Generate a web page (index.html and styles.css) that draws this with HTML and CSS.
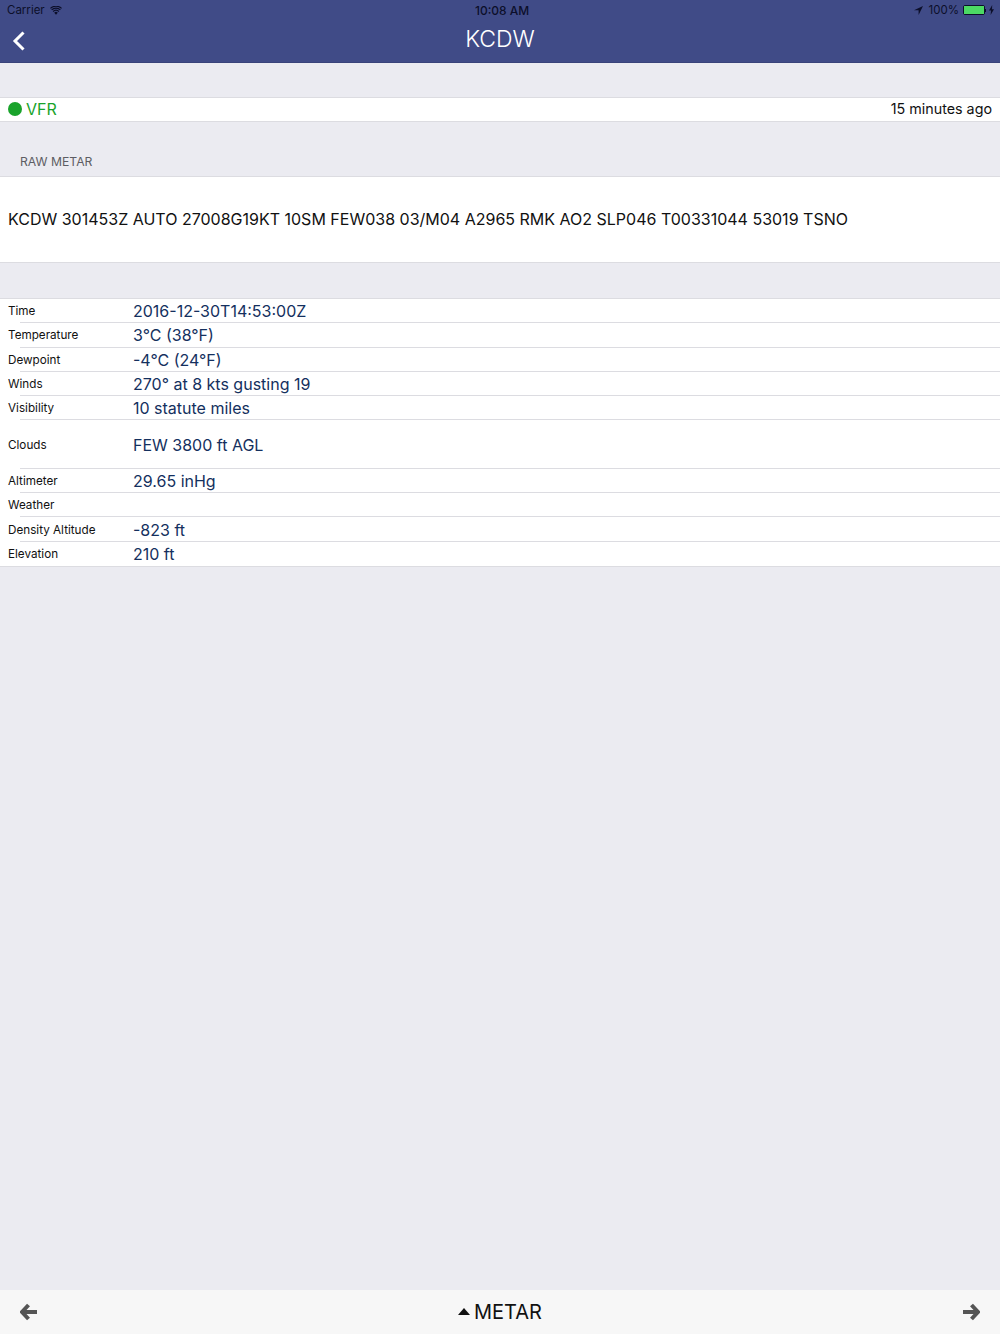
FILE: index.html
```html
<!DOCTYPE html>
<html lang="en">
<head>
  <meta charset="UTF-8">
  <meta name="viewport" content="width=device-width, initial-scale=1.0">
  <title>KCDW</title>
  <link rel="stylesheet" href="styles.css">
</head>
<body>
  <div class="screen">
    <header class="topbar">
      <div class="status">
        <div class="status-side">
          <span>Carrier</span>
          <svg class="wifi" width="12" height="9" viewBox="0 0 14 10">
            <path d="M7 10 4.9 7.6a3 3 0 0 1 4.2 0z" fill="#0c0f2a"/>
            <path d="M3.6 6.2a5 5 0 0 1 6.8 0M1.9 4.3a7.4 7.4 0 0 1 10.2 0M.5 2.5a9.6 9.6 0 0 1 13 0" fill="none" stroke="#0c0f2a" stroke-width="1.4"/>
          </svg>
        </div>
        <div class="status-time">10:08 AM</div>
        <div class="status-side status-right">
          <svg width="9" height="9" viewBox="0 0 9 9"><path d="M9 0 0 4.2h4.6V9z" fill="#0c0f2a"/></svg>
          <span class="pct">100%</span>
          <div class="battery"><div class="battery-fill"></div></div>
          <div class="battery-cap"></div>
          <svg width="5" height="10" viewBox="0 0 5 10"><path d="M3.2 0 0 5.6h2L1.6 10 5 4.2H3z" fill="#0c0f2a"/></svg>
        </div>
      </div>
      <div class="nav">
        <svg class="back" width="14" height="22" viewBox="0 0 14 22"><path d="M11.5 2.5 3 11l8.5 8.5" fill="none" stroke="#fff" stroke-width="3"/></svg>
        <h1>KCDW</h1>
      </div>
    </header>

    <main class="content">
      <div class="flight-row">
        <div class="flight-cat"><span class="dot"></span>VFR</div>
        <div class="age">15 minutes ago</div>
      </div>

      <div class="section-label">RAW METAR</div>
      <div class="raw">KCDW 301453Z AUTO 27008G19KT 10SM FEW038 03/M04 A2965 RMK AO2 SLP046 T00331044 53019 TSNO</div>

      <div class="table">
        <div class="row"><div class="key">Time</div><div class="val">2016-12-30T14:53:00Z</div></div>
        <div class="row"><div class="key">Temperature</div><div class="val">3°C (38°F)</div></div>
        <div class="row"><div class="key">Dewpoint</div><div class="val">-4°C (24°F)</div></div>
        <div class="row"><div class="key">Winds</div><div class="val">270° at 8 kts gusting 19</div></div>
        <div class="row"><div class="key">Visibility</div><div class="val">10 statute miles</div></div>
        <div class="row tall"><div class="key">Clouds</div><div class="val">FEW 3800 ft AGL</div></div>
        <div class="row"><div class="key">Altimeter</div><div class="val">29.65 inHg</div></div>
        <div class="row"><div class="key">Weather</div><div class="val"></div></div>
        <div class="row"><div class="key">Density Altitude</div><div class="val">-823 ft</div></div>
        <div class="row"><div class="key">Elevation</div><div class="val">210 ft</div></div>
      </div>
    </main>

    <footer class="toolbar">
      <svg width="18" height="18" viewBox="0 0 18 18"><path d="M8.5 2 2 9l6.5 7M3 9h14" fill="none" stroke="#555" stroke-width="4"/></svg>
      <div class="product"><span class="caret"></span>METAR</div>
      <svg width="18" height="18" viewBox="0 0 18 18"><path d="M9.5 2 16 9l-6.5 7M15 9H1" fill="none" stroke="#555" stroke-width="4"/></svg>
    </footer>
  </div>
</body>
</html>
```

FILE: styles.css
```css
html, body {
  margin: 0;
  padding: 0;
}
body {
  font-family: Inter, 'Liberation Sans', sans-serif;
  background: #ebebf1;
  color: #111;
}
.screen {
  height: 1334px;
  display: flex;
  flex-direction: column;
  overflow: hidden;
}
.topbar {
  height: 63px;
  flex: none;
  box-sizing: border-box;
  background: #404b87;
  border-bottom: 1px solid #39437a;
}
.status {
  height: 20px;
  display: flex;
  justify-content: space-between;
  align-items: center;
  padding: 0 6px 0 7px;
  font-size: 11.5px;
  color: #0c0f2a;
  position: relative;
}
.status-side {
  display: flex;
  align-items: center;
  gap: 5px;
}
.status-time {
  position: absolute;
  left: 475px;
  top: 3px;
  font-size: 12px;
  font-weight: 500;
}
.status-right {
  gap: 0;
}
.pct {
  margin: 0 4px 0 6px;
}
.battery {
  width: 20px;
  height: 8px;
  border: 1px solid #0c0f2a;
  border-radius: 2px;
}
.battery-fill {
  height: 100%;
  background: #4cd964;
}
.battery-cap {
  width: 1px;
  height: 3px;
  margin-right: 3px;
  background: #0c0f2a;
}
.nav {
  height: 42px;
  display: flex;
  align-items: center;
  justify-content: center;
  position: relative;
}
.nav h1 {
  margin: 0 0 4px;
  font-size: 23px;
  font-weight: 300;
  color: #fff;
}
.back {
  position: absolute;
  left: 12px;
  top: 10px;
}
.content {
  flex: 1;
  padding-top: 34px;
}
.flight-row {
  height: 25px;
  box-sizing: border-box;
  display: flex;
  justify-content: space-between;
  align-items: center;
  padding: 0 8px 2px;
  background: #fff;
  border-top: 1px solid #dcdce1;
  border-bottom: 1px solid #dcdce1;
}
.flight-cat {
  display: flex;
  align-items: center;
  font-size: 16px;
  color: #19a32b;
}
.age {
  font-size: 14.3px;
}
.dot {
  width: 14px;
  height: 14px;
  margin-right: 4px;
  border-radius: 50%;
  background: #19a32b;
}
.section-label {
  padding: 32px 20px 7px;
  font-size: 12.2px;
  line-height: 15px;
  color: #5d5d63;
}
.raw {
  height: 87px;
  box-sizing: border-box;
  display: flex;
  align-items: center;
  padding: 0 8px 2px;
  background: #fff;
  border-top: 1px solid #dcdce1;
  border-bottom: 1px solid #dcdce1;
  font-size: 16px;
}
.table {
  margin-top: 35px;
  background: #fff;
  border-top: 1px solid #dcdce1;
  border-bottom: 1px solid #dcdce1;
}
.row {
  height: 24.27px;
  display: flex;
  align-items: center;
  position: relative;
}
.row + .row::before {
  content: "";
  position: absolute;
  left: 20px;
  right: 0;
  top: -1px;
  height: 1px;
  background: #dcdce1;
}
.row.tall {
  height: 48.6px;
}
.key {
  width: 133px;
  box-sizing: border-box;
  padding-left: 8px;
  font-size: 11.7px;
}
.val {
  font-size: 16px;
  color: #14305e;
}
.toolbar {
  height: 44px;
  flex: none;
  display: flex;
  justify-content: space-between;
  align-items: center;
  padding: 0 20px;
  background: #f7f7f7;
}
.product {
  display: flex;
  align-items: center;
  margin-bottom: 1px;
  font-size: 20px;
}
.caret {
  width: 0;
  height: 0;
  margin-right: 4px;
  border-left: 6px solid transparent;
  border-right: 6px solid transparent;
  border-bottom: 7px solid #111;
}
```
